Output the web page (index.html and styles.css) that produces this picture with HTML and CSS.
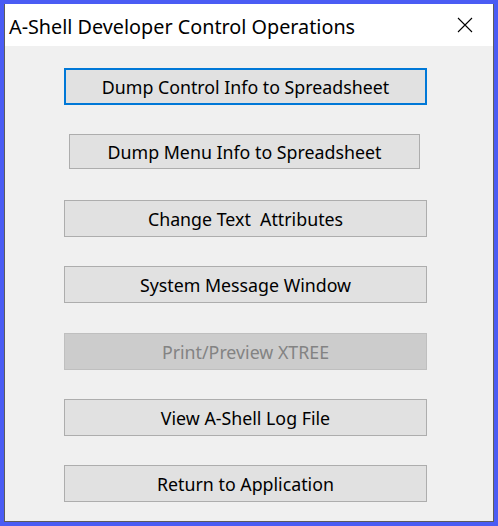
FILE: index.html
```html
<!DOCTYPE html>
<html>
<head>
<meta charset="utf-8">
<link rel="stylesheet" href="styles.css">
</head>
<body>
<div class="window">
  <div class="titlebar">
    <span class="title">A-Shell Developer Control Operations</span>
    <svg class="close" width="16" height="16" viewBox="0 0 16 16">
      <path d="M1 1 L15 15 M15 1 L1 15" stroke="#000" stroke-width="1.1" fill="none"/>
    </svg>
  </div>
  <div class="content">
    <div class="slot"><button class="btn focused">Dump Control Info to Spreadsheet</button></div>
    <div class="slot"><button class="btn narrow">Dump Menu Info to Spreadsheet</button></div>
    <div class="slot"><button class="btn">Change Text&nbsp; Attributes</button></div>
    <div class="slot tall"><button class="btn">System Message Window</button></div>
    <div class="slot"><button class="btn" disabled>Print/Preview XTREE</button></div>
    <div class="slot"><button class="btn">View A-Shell Log File</button></div>
    <div class="slot last"><button class="btn">Return to Application</button></div>
  </div>
</div>
</body>
</html>
```
FILE: styles.css
```css
html, body {
  margin: 0;
  padding: 0;
  height: 100%;
}
body {
  background: #4a5cf4;
  font-family: "Noto Sans", "Open Sans", sans-serif;
}
.window {
  margin: 4px;
  height: 518px;
  width: 490px;
  box-sizing: border-box;
  border: 1px solid #5c5c5c;
  border-top: none;
  display: flex;
  flex-direction: column;
  background: #f0f0f0;
  overflow: hidden;
}
.titlebar {
  flex: 0 0 42px;
  background: #ffffff;
  display: flex;
  align-items: center;
  padding: 0 20px 0 4px;
  justify-content: space-between;
}
.title {
  font-size: 19.8px;
  color: #000;
  padding-top: 2px;
}
.close {
  display: block;
}
.content {
  flex: 1;
  display: flex;
  flex-direction: column;
  padding: 22px 0 0 59px;
}
.slot {
  flex: 0 0 66px;
  display: flex;
  flex-direction: column;
  align-items: flex-start;
}
.slot.tall { flex-basis: 67px; }
.slot.last { flex-basis: auto; }
.btn {
  width: 363px;
  height: 37px;
  box-sizing: border-box;
  border: 1px solid #adadad;
  background: #e1e1e1;
  font-family: inherit;
  font-size: 17.8px;
  color: #000;
  padding: 0;
  margin: 0;
}
.btn.focused {
  border: 2px solid #0078d7;
}
.btn.narrow {
  width: 351px;
  height: 35px;
  margin-left: 5px;
}
.btn:disabled {
  background: #cccccc;
  border-color: #bfbfbf;
  color: #838383;
}
```
